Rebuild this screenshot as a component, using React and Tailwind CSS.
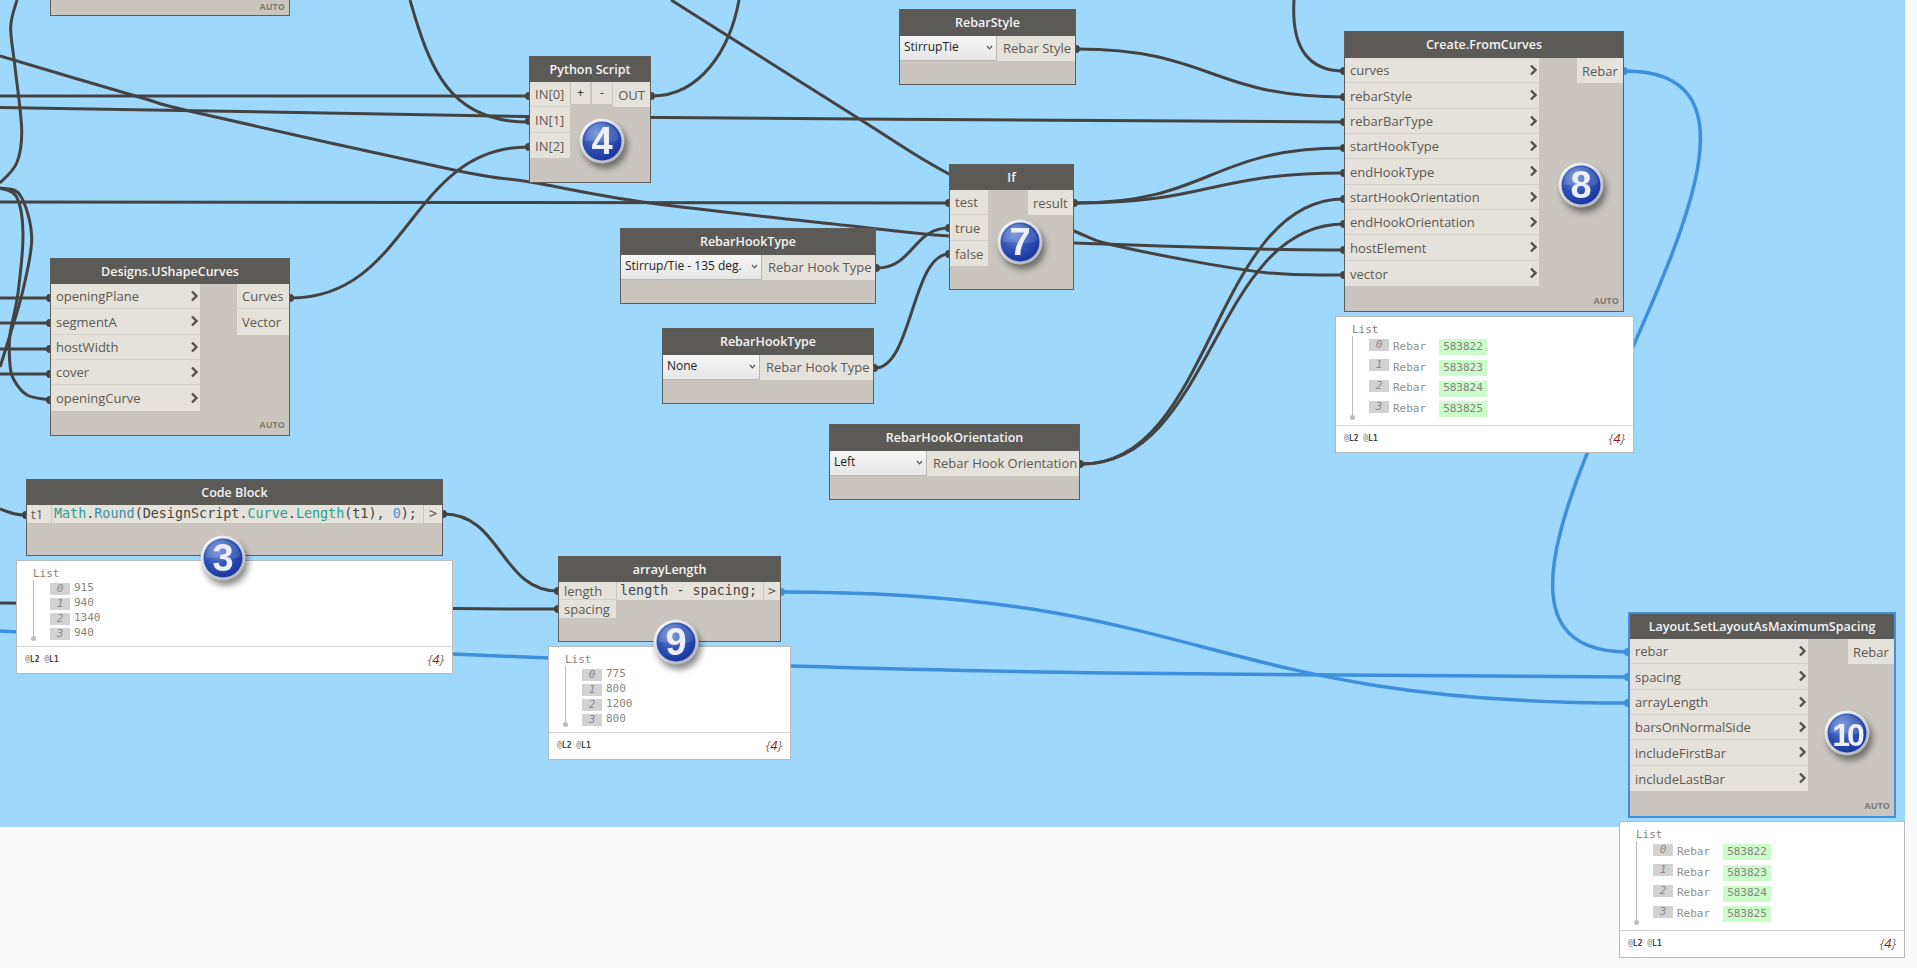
import React from "react";

const toPath = (pts) => {
  let d = `M${pts[0][0]} ${pts[0][1]}`;
  for (let i = 0; i < pts.length - 1; i++) {
    const p0 = pts[i - 1] || pts[i];
    const p1 = pts[i];
    const p2 = pts[i + 1];
    const p3 = pts[i + 2] || p2;
    const c1x = p1[0] + (p2[0] - p0[0]) / 6;
    const c1y = p1[1] + (p2[1] - p0[1]) / 6;
    const c2x = p2[0] - (p3[0] - p1[0]) / 6;
    const c2y = p2[1] - (p3[1] - p1[1]) / 6;
    d += ` C${c1x} ${c1y} ${c2x} ${c2y} ${p2[0]} ${p2[1]}`;
  }
  return d;
};

// same shape as the editor's connectors: horizontal tangents, control points at mid x
const link = (x0, y0, x1, y1) => {
  const mx = (x0 + x1) / 2;
  return `M${x0} ${y0} C${mx} ${y0} ${mx} ${y1} ${x1} ${y1}`;
};

const darkPaths = [
  link(0, 96, 528, 96),
  toPath([[0, 107.5], [528, 116.5], [1344, 122]]),
  "M410 0 C430 70 450 122 528 122",
  "M652 96 C700 96 730 50 739 0",
  toPath([[0, 56], [139, 97], [198, 113], [454, 170], [530, 182], [650, 203], [852, 226], [949, 236], [1074, 243], [1260, 249], [1344, 250]]),
  toPath([[671, 0], [861, 120], [949, 174], [1074, 231], [1126, 248], [1260, 272], [1344, 275]]),
  link(0, 202, 949, 203),
  link(1076, 203, 1344, 148),
  link(1076, 203, 1344, 173),
  link(877, 268, 949, 228),
  link(875, 368, 949, 254),
  link(1077, 49, 1344, 97),
  link(1082, 464, 1344, 199),
  link(1082, 464, 1344, 224),
  "M1294 0 C1291 50 1310 71 1344 71",
  toPath([[17, 0], [10.7, 27], [15, 67], [21.7, 130], [16.7, 163], [0, 183]]),
  toPath([[0, 188], [20, 195], [31.7, 237], [23, 290], [10, 335], [0, 367]]),
  toPath([[0, 188], [16.7, 197], [23, 233], [18, 293], [10, 335], [10, 365], [14, 380], [27, 395], [50, 400]]),
  link(0, 298, 50, 298),
  link(0, 323, 50, 323),
  link(0, 349, 50, 349),
  link(0, 374, 50, 374),
  link(291, 298, 528, 147),
  "M0 509 C10 513 16 515 26 515",
  link(444, 514, 558, 591),
  link(0, 603, 558, 609),
];

const bluePaths = [
  "M1625 71 C1885 71 1368 652 1628 652",
  link(782, 592, 1628, 703),
  toPath([[0, 631], [453, 654], [791, 666], [1109, 673], [1628, 677]]),
];

const darkPorts = [
  [529, 96], [529, 121], [529, 147], [651, 96],
  [50, 298], [50, 323], [50, 349], [50, 374], [50, 400], [290, 298],
  [1076, 49], [949, 203], [949, 228], [949, 254], [1074, 203],
  [876, 268], [874, 368], [1080, 464],
  [1344, 71], [1344, 97], [1344, 122], [1344, 148], [1344, 173], [1344, 199], [1344, 224], [1344, 250], [1344, 275],
  [26, 515], [443, 514], [558, 591], [558, 609],
];

const bluePorts = [[1624, 71], [781, 592], [1628, 652], [1628, 677], [1628, 703]];

const Wires = () => (
  <svg className="absolute left-0 top-0 h-[827px] w-[1905px]" viewBox="0 0 1905 827" fill="none">
    <defs>
      <radialGradient id="ballBlue" cx="0.36" cy="0.3" r="0.8">
        <stop offset="0" stopColor="#6f90d8" />
        <stop offset="0.5" stopColor="#2f52b4" />
        <stop offset="1" stopColor="#16309c" />
      </radialGradient>
      <linearGradient id="ballRim" x1="0" y1="0" x2="0.7" y2="1">
        <stop offset="0" stopColor="#ffffff" />
        <stop offset="1" stopColor="#b4b6bc" />
      </linearGradient>
    </defs>
    {darkPaths.map((d, i) => (
      <path key={i} d={d} stroke="#444342" strokeWidth="3" />
    ))}
    {bluePaths.map((d, i) => (
      <path key={i} d={d} stroke="#3f8fdc" strokeWidth="3.5" />
    ))}
    {darkPorts.map(([cx, cy], i) => (
      <circle key={i} cx={cx} cy={cy} r="4" fill="#444342" />
    ))}
    {bluePorts.map(([cx, cy], i) => (
      <circle key={i} cx={cx} cy={cy} r="4" fill="#3f8fdc" />
    ))}
  </svg>
);

const Chevron = () => (
  <svg className="h-[12px] w-[9px] shrink-0" viewBox="0 0 9 12" fill="none">
    <path d="M2 1.5 L6.5 6 L2 10.5" stroke="#55524e" strokeWidth="2.4" />
  </svg>
);

const Node = ({ className, title, head = "h-[25px]", selected, auto, autoBottom = "bottom-[6px]", children }) => (
  <div
    className={`absolute flex flex-col bg-[#cac6bf] ${
      selected ? "border-2 border-[#3f8fdc]" : "border border-[#5f5d5a]"
    } ${className}`}
  >
    <div
      className={`flex shrink-0 items-center justify-center bg-[#5c5a57] pt-[1px] text-[12.5px] font-semibold text-[#f4f4f4] ${head}`}
    >
      {title}
    </div>
    <div className="flex flex-1 justify-between">{children}</div>
    {auto && (
      <span className={`absolute right-[4px] text-[9px] font-bold leading-[9px] text-[#7d7a75] ${autoBottom}`}>
        AUTO
      </span>
    )}
  </div>
);

const Ports = ({ names, className = "", arrows, rowH = "h-[25.33px]" }) => (
  <div className={`flex flex-col self-start ${className}`}>
    {names.map((name) => (
      <div
        key={name}
        className={`flex items-center justify-between border-b border-[#d3d0ca] bg-[#e5e2dc] px-[5px] pr-[1px] text-[13px] text-[#5c5852] last:border-b-0 ${rowH}`}
      >
        <span className="pt-[2px]">{name}</span>
        {arrows && <Chevron />}
      </div>
    ))}
  </div>
);

const Dropdown = ({ label, className }) => (
  <div
    className={`flex h-[25px] items-start justify-between whitespace-nowrap border-b border-r border-[#b9b7b2] bg-gradient-to-b from-[#f6f6f6] to-[#e6e6e6] pl-[4px] pr-[3px] pt-[1.5px] text-[12px] leading-[18px] text-[#222222] ${className}`}
  >
    <span>{label}</span>
    <svg className="mt-[7px] h-[5px] w-[7px] shrink-0" viewBox="0 0 7 5" fill="none">
      <path d="M1 1 L3.5 3.8 L6 1" stroke="#555555" strokeWidth="1.2" />
    </svg>
  </div>
);

const Selector = ({ className, title, label, dropW, output }) => (
  <Node className={className} title={title} head="h-[26px]">
    <div className="flex h-[25px] w-full self-start">
      <Dropdown label={label} className={dropW} />
      <div className="flex h-[25px] flex-1 items-center whitespace-nowrap bg-[#e5e2dc] pl-[6px] text-[13px] text-[#5c5852]">
        {output}
      </div>
    </div>
  </Node>
);

const Preview = ({ className, rows, tall }) => (
  <div
    className={`absolute border border-[#b9b9b9] bg-white font-['DejaVu_Sans_Mono',monospace] text-[11px] text-[#85857c] ${className}`}
  >
    <div className="pb-[6px] pl-[16px] pt-[7px]">
      <div className="h-[12px] leading-[12px]">List</div>
      <div className="relative border-l border-[#bdbdbd] pl-[16px]">
        {rows.map((row, i) => (
          <div
            key={i}
            className={`flex items-center gap-[4px] pt-[2px] ${tall ? "h-[20.67px]" : "h-[15px]"}`}
          >
            <span
              className={`w-[20px] bg-[#d2d2d2] text-center italic leading-[12px] text-[#8c8c8c] ${
                tall ? "-mt-[5px]" : ""
              }`}
            >
              {i}
            </span>
            {row.label && <span className="w-[42px] text-[#8e8e8e]">{row.label}</span>}
            <span className={row.label ? "flex h-[16px] w-[48px] items-center justify-center bg-[#ccfccc]" : ""}>
              {row.value}
            </span>
          </div>
        ))}
        <span className="absolute -left-[3px] bottom-[-1px] h-[5px] w-[5px] rounded-full bg-[#bdbdbd]" />
      </div>
    </div>
    <div className="flex h-[27px] items-center justify-between border-t border-[#d4d4d4] pl-[8px] pr-[8px]">
      <span className="text-[8px] font-bold text-[#444444]">
        <span className="text-[#999999]">@</span>L2 <span className="text-[#999999]">@</span>L1
      </span>
      <span className="font-['Open_Sans',sans-serif] text-[13px] italic text-[#777777]">
        {"{"}
        <span className="text-[#8b1a1a]">4</span>
        {"}"}
      </span>
    </div>
  </div>
);

const Ball = ({ className, n, size = "text-[38px]" }) => (
  <svg
    className={`absolute h-[48px] w-[48px] drop-shadow-[3px_5px_3px_rgba(0,0,0,0.45)] ${className}`}
    viewBox="0 0 48 48"
  >
    <circle cx="24" cy="24" r="22.5" fill="url(#ballRim)" />
    <circle cx="24" cy="24" r="19.5" fill="url(#ballBlue)" />
    <path d="M7 24 A17 17 0 0 1 41 22 C32 29 18 22 7 24 Z" fill="#ffffff" opacity="0.13" />
    <text
      x="24"
      y="37"
      textAnchor="middle"
      fill="#eef0f8"
      fontWeight="700"
      className={`font-['Liberation_Sans',sans-serif] ${size}`}
    >
      {n}
    </text>
  </svg>
);

const rebarRows = [
  { label: "Rebar", value: "583822" },
  { label: "Rebar", value: "583823" },
  { label: "Rebar", value: "583824" },
  { label: "Rebar", value: "583825" },
];

const App = () => (
  <div className="relative h-[968px] w-[1917px] overflow-hidden bg-[#f9f9f9] font-['Open_Sans',sans-serif]">
    <div className="relative h-[827px] w-[1905px] bg-[#9fd8fd]">
      <Wires />

      <Node className="left-[50px] top-[-44px] h-[60px] w-[240px]" title="" auto autoBottom="bottom-[4px]" />

      <Node
        className="left-[50px] top-[258px] h-[178px] w-[240px]"
        title="Designs.UShapeCurves"
        auto
      >
        <Ports
          className="w-[149px]"
          arrows
          names={["openingPlane", "segmentA", "hostWidth", "cover", "openingCurve"]}
        />
        <Ports className="w-[52px]" names={["Curves", "Vector"]} />
      </Node>

      <Node className="left-[529px] top-[56px] h-[127px] w-[122px]" title="Python Script">
        <Ports className="w-[40px]" names={["IN[0]", "IN[1]", "IN[2]"]} />
        <div className="flex flex-1 items-start">
          <div className="ml-[1px] flex h-[22px] w-[19px] items-center justify-center bg-[#e5e2dc] text-[12px] text-[#333333]">
            +
          </div>
          <div className="ml-[2px] flex h-[22px] w-[20px] items-center justify-center bg-[#e5e2dc] text-[12px] text-[#333333]">
            -
          </div>
          <div className="ml-[1px] flex h-[25px] flex-1 items-center justify-center bg-[#e5e2dc] pt-[2px] text-[13px] text-[#5c5852]">
            OUT
          </div>
        </div>
      </Node>

      <Selector
        className="left-[899px] top-[9px] h-[76px] w-[177px]"
        title="RebarStyle"
        label="StirrupTie"
        dropW="w-[97px]"
        output="Rebar Style"
      />

      <Node className="left-[949px] top-[164px] h-[126px] w-[125px]" title="If" head="h-[25px]">
        <Ports className="w-[38px]" names={["test", "true", "false"]} />
        <Ports className="w-[45px]" names={["result"]} />
      </Node>

      <Selector
        className="left-[620px] top-[228px] h-[76px] w-[256px]"
        title="RebarHookType"
        label="Stirrup/Tie - 135 deg."
        dropW="w-[141px]"
        output="Rebar Hook Type"
      />
      <Selector
        className="left-[662px] top-[328px] h-[76px] w-[212px]"
        title="RebarHookType"
        label="None"
        dropW="w-[97px]"
        output="Rebar Hook Type"
      />
      <Selector
        className="left-[829px] top-[424px] h-[76px] w-[251px]"
        title="RebarHookOrientation"
        label="Left"
        dropW="w-[97px]"
        output="Rebar Hook Orientation"
      />

      <Node
        className="left-[1344px] top-[31px] h-[281px] w-[280px]"
        title="Create.FromCurves"
        head="h-[26px]"
        auto
      >
        <Ports
          className="w-[194px]"
          arrows
          names={[
            "curves",
            "rebarStyle",
            "rebarBarType",
            "startHookType",
            "endHookType",
            "startHookOrientation",
            "endHookOrientation",
            "hostElement",
            "vector",
          ]}
        />
        <Ports className="w-[46px]" names={["Rebar"]} />
      </Node>
      <Preview className="left-[1335px] top-[316px] w-[299px]" rows={rebarRows} tall />

      <Node className="left-[26px] top-[479px] h-[77px] w-[417px]" title="Code Block">
        <div className="flex h-[18px] w-full self-start font-['DejaVu_Sans_Mono',monospace] text-[13.4px] text-[#454545]">
          <div className="flex w-[24px] items-center bg-[#e5e2dc] pl-[4px] pt-[2px] font-['Open_Sans',sans-serif] text-[13px] text-[#5c5852]">
            t1
          </div>
          <div className="ml-[1px] flex flex-1 items-center whitespace-pre bg-[#e5e2dc] pl-[2px]">
            <span className="text-[#2a9d8f]">Math</span>.<span className="text-[#3a8ea8]">Round</span>(DesignScript.
            <span className="text-[#2a9d8f]">Curve</span>.<span className="text-[#2aa08a]">Length</span>(t1),{" "}
            <span className="text-[#4a90d9]">0</span>);
          </div>
          <div className="ml-[1px] flex w-[18px] items-center justify-center bg-[#e5e2dc] text-[#5c5852]">&gt;</div>
        </div>
      </Node>
      <Preview
        className="left-[16px] top-[560px] w-[437px]"
        rows={[{ value: "915" }, { value: "940" }, { value: "1340" }, { value: "940" }]}
      />

      <Node className="left-[558px] top-[556px] h-[86px] w-[223px]" title="arrayLength">
        <div className="flex w-full items-start self-start">
          <Ports className="w-[57px]" rowH="h-[18px]" names={["length", "spacing"]} />
          <div className="ml-[1px] flex h-[18px] w-[146px] items-center whitespace-pre bg-[#e5e2dc] pl-[3px] font-['DejaVu_Sans_Mono',monospace] text-[13.4px] text-[#454545]">
            length - spacing;
          </div>
          <div className="ml-[1px] flex h-[18px] flex-1 items-center justify-center bg-[#e5e2dc] font-['DejaVu_Sans_Mono',monospace] text-[13px] text-[#5c5852]">
            &gt;
          </div>
        </div>
      </Node>
      <Preview
        className="left-[548px] top-[646px] w-[243px]"
        rows={[{ value: "775" }, { value: "800" }, { value: "1200" }, { value: "800" }]}
      />

      <Node
        className="left-[1628px] top-[612px] h-[206px] w-[268px]"
        title="Layout.SetLayoutAsMaximumSpacing"
        selected
        auto
      >
        <Ports
          className="w-[178px]"
          arrows
          names={["rebar", "spacing", "arrayLength", "barsOnNormalSide", "includeFirstBar", "includeLastBar"]}
        />
        <Ports className="w-[46px]" names={["Rebar"]} />
      </Node>
      <Preview className="left-[1619px] top-[821px] w-[286px]" rows={rebarRows} tall />

      <Ball className="left-[578px] top-[117px]" n="4" />
      <Ball className="left-[996px] top-[218px]" n="7" />
      <Ball className="left-[1557px] top-[161px]" n="8" />
      <Ball className="left-[199px] top-[534px]" n="3" />
      <Ball className="left-[652px] top-[618px]" n="9" />
      <Ball className="left-[1823px] top-[709px]" n="10" size="text-[32px] tracking-[-3px]" />
    </div>
  </div>
);

export default App;
